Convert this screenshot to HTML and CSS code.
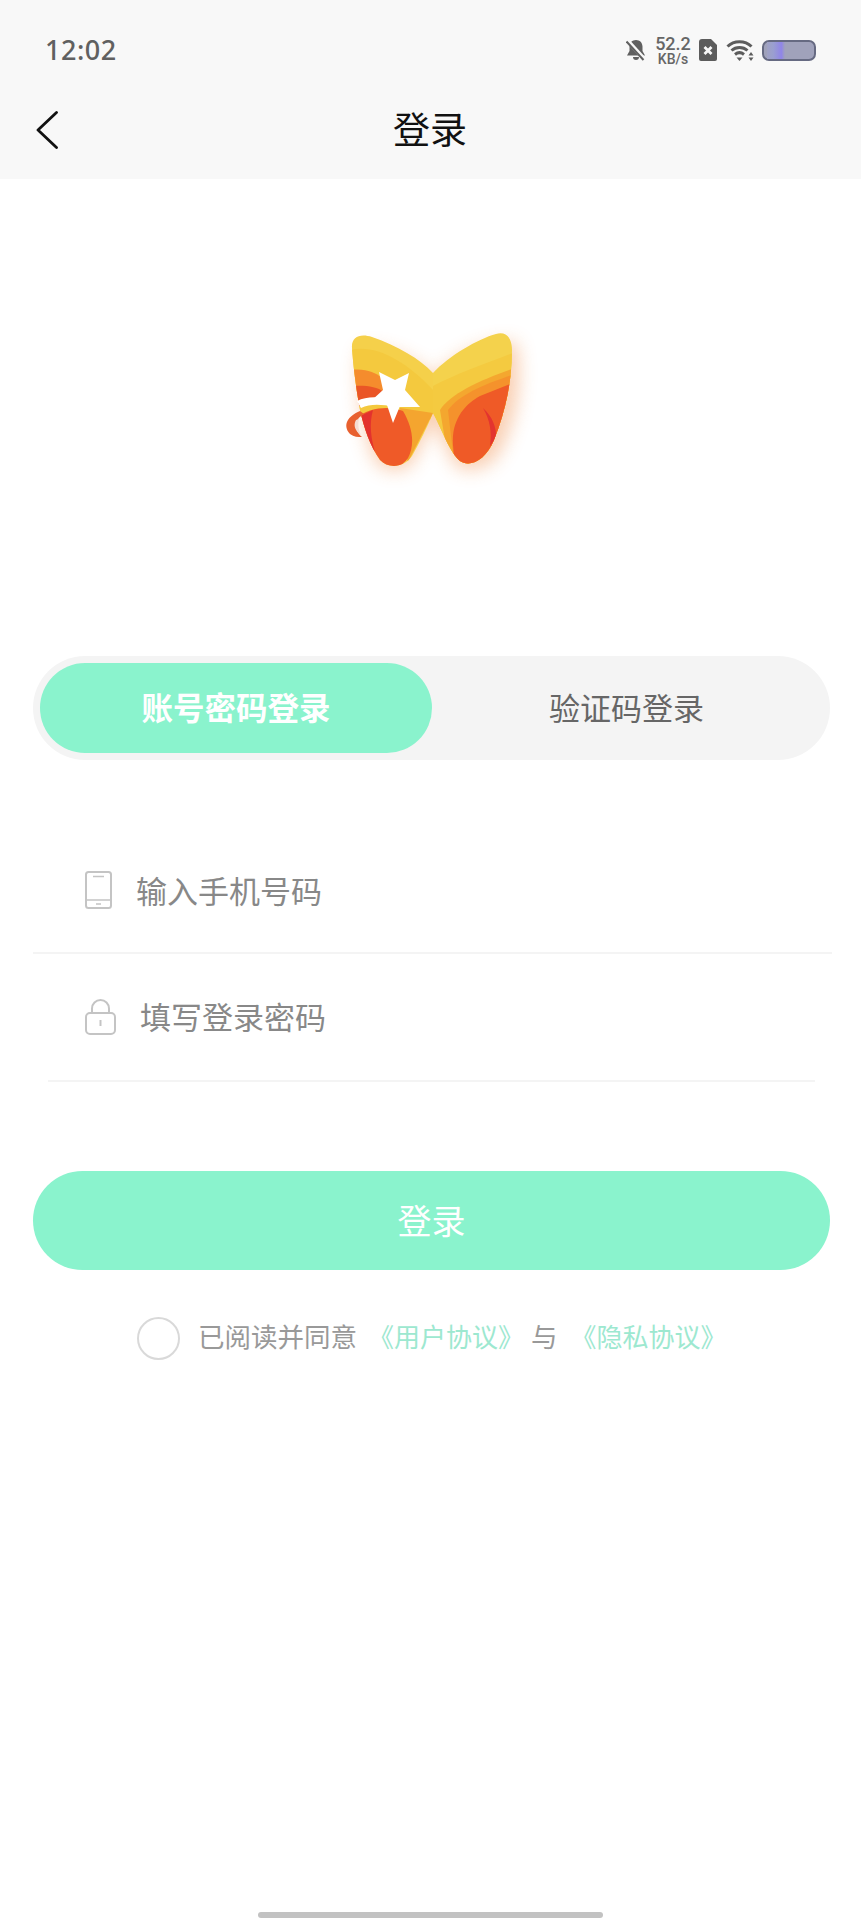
FILE: index.html
```html
<!DOCTYPE html>
<html lang="zh-CN">
<head>
    <meta charset="UTF-8">
    <meta name="viewport" content="width=device-width, initial-scale=1.0">
    <title>登录</title>
    <link rel="stylesheet" href="styles.css">
</head>
<body>
    <header class="top-bar">
        <div class="status-bar">
            <span class="clock">12:02</span>
            <div class="status-icons">
                <svg class="icon-bell" viewBox="0 0 20 22">
                    <path d="M10 1c-3.800 0-6.500 2.800-6.500 6.500v4.500L1 16.500h18L16.500 12V7.500C16.500 3.800 13.800 1 10 1z" fill="#606060"/>
                    <path d="M7 18h6a3 3 0 0 1-6 0z" fill="#606060"/>
                    <path d="M1 1l18 20" stroke="#f8f8f8" stroke-width="4"/>
                    <path d="M0.500 2.500l17 18.500" stroke="#606060" stroke-width="2"/>
                </svg>
                <div class="net-speed">
                    <span class="net-value">52.2</span>
                    <span class="net-unit">KB/s</span>
                </div>
                <svg class="icon-sim" viewBox="0 0 18 22">
                    <path d="M3 0h9l6 6v14a2 2 0 0 1-2 2H2a2 2 0 0 1-2-2V3a3 3 0 0 1 3-3z" fill="#5c5c5c"/>
                    <path d="M5.500 8l7 7M12.500 8l-7 7" stroke="#f8f8f8" stroke-width="2.800"/>
                </svg>
                <svg class="icon-wifi" viewBox="0 0 28 22">
                    <path d="M1.500 7.500C8 1 19 1 25.500 7.500" fill="none" stroke="#5c5c5c" stroke-width="3"/>
                    <path d="M5.500 11.500C10 7.500 17 7.500 21.500 11.500" fill="none" stroke="#5c5c5c" stroke-width="3"/>
                    <path d="M9 15.500c2.700-2.200 6.300-2.200 9 0" fill="none" stroke="#5c5c5c" stroke-width="3"/>
                    <path d="M10.500 18.500h6L13.500 22z" fill="#5c5c5c"/>
                    <path d="M25 13l2.500 3.500h-5zM25 22l2.500-3.500h-5z" fill="#5c5c5c"/>
                </svg>
                <div class="battery"><span class="battery-level"></span></div>
            </div>
        </div>
        <nav class="nav-bar">
            <svg class="back" viewBox="0 0 24 38">
                <path d="M21.500 1.500L3 19l18.500 17.500" fill="none" stroke="#111" stroke-width="2.800" stroke-linecap="round" stroke-linejoin="round"/>
            </svg>
            <h1 class="nav-title">登录</h1>
        </nav>
    </header>

    <main class="login">
        <div class="logo">
            <svg viewBox="0 0 240 180" width="240" height="180">
                <defs>
                    <filter id="glow" x="-30%" y="-30%" width="160%" height="160%">
                        <feGaussianBlur stdDeviation="9"/>
                    </filter>
                    <clipPath id="leftWing">
                        <path d="M32 38C31 27 40 23 52 27C78 36 100 49 113 63L113 103C107 117 100 132 92 146C84 158 68 159 60 150C50 136 44 118 40 100C35 72 33 52 32 38Z"/>
                    </clipPath>
                    <clipPath id="rightWing">
                        <path d="M113 63C130 45 158 29 176 24C187 21 192 29 192 40C192 70 186 100 174 130C166 150 150 158 140 151C130 143 122 120 113 103Z"/>
                    </clipPath>
                </defs>
                <path filter="url(#glow)" opacity="0.38" fill="#f0843a" d="M40 40C60 34 100 50 113 68C130 50 160 30 196 32C204 70 196 112 180 142C168 162 145 164 135 155L113 112L92 154C80 164 64 162 56 152C44 130 36 80 40 40Z"/>
                <g clip-path="url(#leftWing)">
                    <rect x="25" y="20" width="95" height="140" fill="#f5d04a"/>
                    <path d="M30 40C55 34 85 50 113 80L113 110L30 110Z" fill="#f4c93e"/>
                    <path d="M30 60C45 58 55 62 62 68L68 92L30 92Z" fill="#f58c2d"/>
                    <path d="M30 76C45 75 56 76 64 82L45 96L30 96Z" fill="#ea5526"/>
                    <path d="M80 98L113 103L88 152L84 140Z" fill="#f4a52f"/>
                    <path d="M36 108C50 97 70 96 83 101C93 118 95 135 88 148C79 161 66 160 58 150C48 136 42 122 36 108Z" fill="#ef5a28"/>
                    <path d="M36 108L53 100C49 114 51 128 55 142L44 130Z" fill="#e3322e"/>
                </g>
                <g clip-path="url(#rightWing)">
                    <rect x="110" y="20" width="90" height="140" fill="#f4d24c"/>
                    <path d="M113 76C135 64 165 54 195 42L195 160L113 160Z" fill="#f4ca40"/>
                    <path d="M120 100C130 84 160 70 195 58L195 160L130 160Z" fill="#f4a72f"/>
                    <path d="M128 100C140 84 165 74 195 64L195 160L135 160Z" fill="#f5922c"/>
                    <path d="M133 135C131 110 145 94 160 86L195 72L195 160L135 160Z" fill="#ef5a27"/>
                    <path d="M163 98C172 106 177 118 176 128L170 136C172 122 170 110 163 98Z" fill="#e3342f"/>
                </g>
                <path d="M37 91C50 85 65 86 100 97L75 97C60 94 50 94 41 98Z" fill="#fff"/>
                <path d="M59 62L75 70L89 63L85 80L100 97L80 96L73 113L67 95L52 90L63 80Z" fill="#fff"/>
                <path d="M40 101C28 106 22 115 30 124C34 127 38 127 42 127C34 120 33 110 44 104Z" fill="#e8602f"/>
                <path d="M36 110C33 115 35 121 41 125C38 119 38 114 39 109Z" fill="#f5dcd2"/>
            </svg>
        </div>

        <div class="tabs">
            <div class="tab tab-active">账号密码登录</div>
            <div class="tab tab-idle">验证码登录</div>
        </div>

        <div class="field field-phone">
            <svg class="field-icon" viewBox="0 0 27 38" width="27" height="38">
                <rect x="1" y="1" width="25" height="36" rx="2.500" fill="none" stroke="#c4c4c4" stroke-width="2"/>
                <path d="M1 29h25M8 5.500h11M11 33h5" fill="none" stroke="#c4c4c4" stroke-width="1.600"/>
            </svg>
            <span class="field-text">输入手机号码</span>
        </div>
        <div class="field field-lock">
            <svg class="field-icon" viewBox="0 0 31 36" width="31" height="36">
                <rect x="1" y="14" width="29" height="21" rx="4" fill="none" stroke="#c4c4c4" stroke-width="2"/>
                <path d="M7 14V9.500a8.500 8.500 0 0 1 17 0V14" fill="none" stroke="#c4c4c4" stroke-width="2"/>
                <path d="M15.500 21v6" stroke="#c4c4c4" stroke-width="2"/>
            </svg>
            <span class="field-text">填写登录密码</span>
        </div>

        <button class="submit">登录</button>

        <div class="agree">
            <span class="agree-check"></span>
            <span class="agree-text">已阅读并同意</span>
            <span class="agree-link">《用户协议》</span>
            <span class="agree-text agree-and">与</span>
            <span class="agree-link agree-link-last">《隐私协议》</span>
        </div>
    </main>

    <div class="home-bar"></div>
</body>
</html>
```

FILE: styles.css
```css
* {
    box-sizing: border-box;
}

html, body {
    height: 100%;
}

body {
    margin: 0;
    background-color: #fff;
    font-family: "Noto Sans CJK SC", "Noto Sans", sans-serif;
    display: flex;
    flex-direction: column;
}

/* Top bar */
.top-bar {
    height: 179px;
    background-color: #f8f8f8;
    padding: 0 45px 0 35px;
}

.status-bar {
    height: 102px;
    padding: 36px 0 0 10px;
    display: flex;
    justify-content: space-between;
    align-items: flex-start;
}

.clock {
    font-family: "Noto Sans", sans-serif;
    font-size: 27px;
    font-weight: 500;
    line-height: 27px;
    color: #606060;
    letter-spacing: 0.5px;
}

.status-icons {
    display: flex;
    align-items: center;
    height: 28px;
}

.icon-bell {
    width: 20px;
    height: 22px;
    margin-right: 9px;
}

.net-speed {
    display: flex;
    flex-direction: column;
    align-items: center;
    width: 36px;
    padding-top: 2px;
    font-family: Roboto, sans-serif;
    font-weight: 500;
    color: #666;
    margin-right: 8px;
}

.net-value {
    font-size: 18px;
    line-height: 16px;
}

.net-unit {
    font-size: 14px;
    line-height: 14px;
}

.icon-sim {
    width: 18px;
    height: 22px;
    margin-right: 9px;
}

.icon-wifi {
    width: 28px;
    height: 22px;
    margin-right: 8px;
}

.battery {
    width: 54px;
    height: 21px;
    border: 2.5px solid #666a82;
    border-radius: 7px;
    background-color: #a0a2bb;
    padding-left: 3px;
}

.battery-level {
    display: block;
    width: 18px;
    height: 100%;
    background: linear-gradient(90deg, #a0a2c4, #9a9fd0 35%, #9085e8 80%, #a0a2bb);
}

.nav-bar {
    display: flex;
    align-items: center;
    height: 56px;
}

.back {
    width: 24px;
    height: 38px;
    flex-shrink: 0;
}

.nav-title {
    margin: 0 0 4px 334px;
    font-size: 37px;
    font-weight: 400;
    line-height: 52px;
    color: #111;
}

/* Login form */
.login {
    flex: 1;
    padding: 0 31px 0 33px;
}

.logo {
    display: flex;
    justify-content: center;
    padding: 131px 0 0 16px;
    height: 477px;
}

.logo svg {
    filter: blur(0.6px);
}

.tabs {
    display: flex;
    align-items: center;
    height: 104px;
    padding: 0 7px;
    background-color: #f4f4f4;
    border-radius: 52px;
}

.tab {
    flex: 1;
    text-align: center;
    font-size: 31px;
    color: #666;
}

.tab-active {
    flex: 0 0 392px;
    height: 90px;
    line-height: 87px;
    font-size: 31.5px;
    border-radius: 45px;
    background-color: #8af3cd;
    color: #fff;
    font-weight: 700;
}

.tab-idle {
    padding: 0 2px 3px 0;
}

.field {
    display: flex;
    align-items: center;
    border-bottom: 2px solid #f4f4f4;
}

.field-phone {
    height: 194px;
    padding: 70px 0 0 52px;
    margin-right: -2px;
}

.field-phone .field-icon {
    margin-top: -2px;
}

.field-lock {
    height: 128px;
    padding: 0 0 0 37px;
    margin: 0 15px 0 15px;
}

.field-icon {
    flex-shrink: 0;
}

.field-text {
    font-size: 31px;
    color: #888;
    margin: 0 0 3px 24px;
}

.submit {
    display: block;
    width: 100%;
    height: 99px;
    margin-top: 89px;
    padding: 0 0 3px;
    border: none;
    border-radius: 50px;
    background-color: #8af3cd;
    color: #fff;
    font-family: inherit;
    font-size: 34px;
}

.agree {
    display: flex;
    align-items: center;
    margin-top: 44px;
    padding-left: 104px;
    font-size: 26.5px;
    line-height: 43px;
}

.agree-check {
    width: 43px;
    height: 43px;
    border: 2px solid #d9d9d9;
    border-radius: 50%;
    margin-right: 18px;
}

.agree-text {
    color: #999;
    margin-bottom: 6px;
}

.agree-and {
    margin-left: 7px;
}

.agree-link {
    color: #9de8d0;
    font-size: 26px;
    margin: 0 0 6px 11px;
}

.agree-link-last {
    margin-left: 13px;
}

/* Home indicator */
.home-bar {
    width: 345px;
    height: 6px;
    margin: 0 0 2px 258px;
    background-color: #c2c2c2;
    border-radius: 3px;
}
```
